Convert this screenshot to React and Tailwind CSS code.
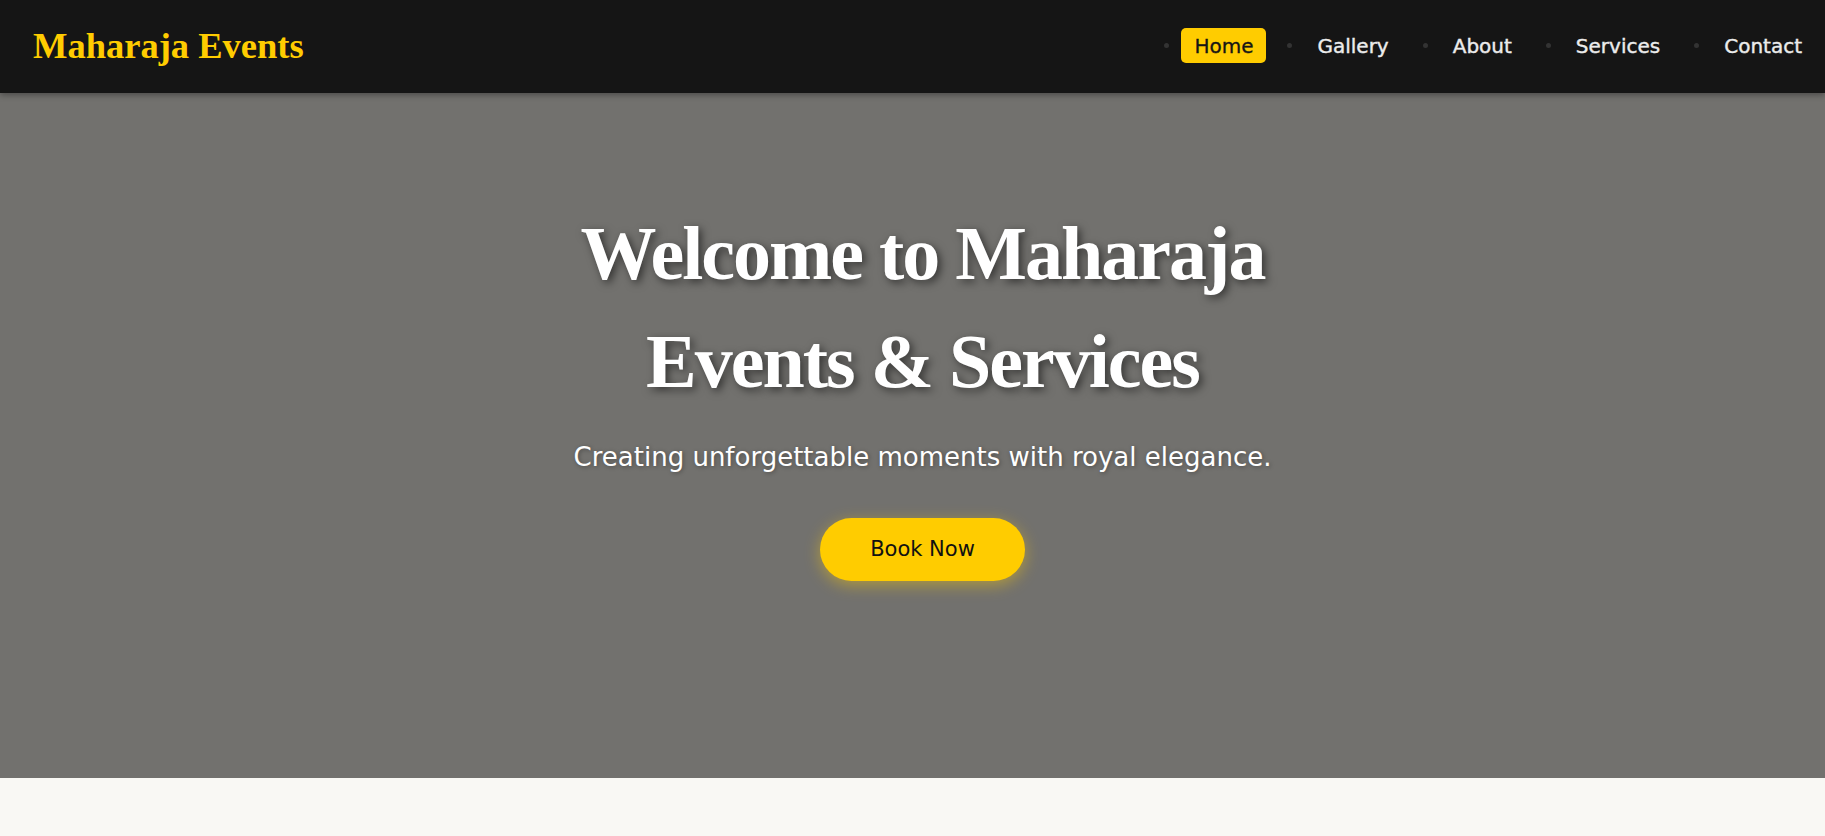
import React from "react";

const links = ["Home", "Gallery", "About", "Services", "Contact"];

export default function App() {
  return (
    <div className="min-h-screen bg-[#f9f8f4] font-['DejaVu_Sans',sans-serif]">
      <nav className="h-[93px] bg-[#151515] flex items-center justify-between pl-[33px] pr-[10px] shadow-[0_2px_6px_rgba(0,0,0,0.35)] relative z-10">
        <div className="font-['Liberation_Serif',serif] font-bold text-[36.5px] text-[#ffcc00] leading-none">
          Maharaja Events
        </div>
        <ul className="flex items-center gap-[21px] -mt-[2px]">
          {links.map((l, i) => (
            <li key={l} className="flex items-center gap-[12px]">
              <span className="w-[5px] h-[5px] rounded-full bg-[#333333]" />
              <a
                className={
                  i === 0
                    ? "h-[35px] px-[13px] flex items-center rounded-[5px] bg-[#ffcc00] text-[#151515] text-[20px] [-webkit-text-stroke:0.3px_#151515]"
                    : "h-[35px] px-[13px] flex items-center text-[#ececec] text-[20px] [-webkit-text-stroke:0.4px_#ececec]"
                }
              >
                {l}
              </a>
            </li>
          ))}
        </ul>
      </nav>
      <section className="h-[685px] bg-[#72716e] flex flex-col items-center pt-[106px] pl-[20px]">
        <h1 className="font-['Liberation_Serif',serif] font-bold text-[76px] leading-[108px] tracking-[-2px] text-white text-center [text-shadow:3px_3px_8px_rgba(0,0,0,0.55)]">
          Welcome to Maharaja
          <br />
          Events &amp; Services
        </h1>
        <p className="mt-[24px] text-[26px] leading-[36px] text-white [text-shadow:1px_1px_4px_rgba(0,0,0,0.35)]">
          Creating unforgettable moments with royal elegance.
        </p>
        <button className="mt-[43px] h-[63px] px-[50px] rounded-full bg-[#ffcc00] text-[#111] text-[21px] flex items-center shadow-[0_4px_16px_rgba(255,204,0,0.45)]">
          Book Now
        </button>
      </section>
      <section className="h-[300px] bg-[#f9f8f4]" />
    </div>
  );
}
